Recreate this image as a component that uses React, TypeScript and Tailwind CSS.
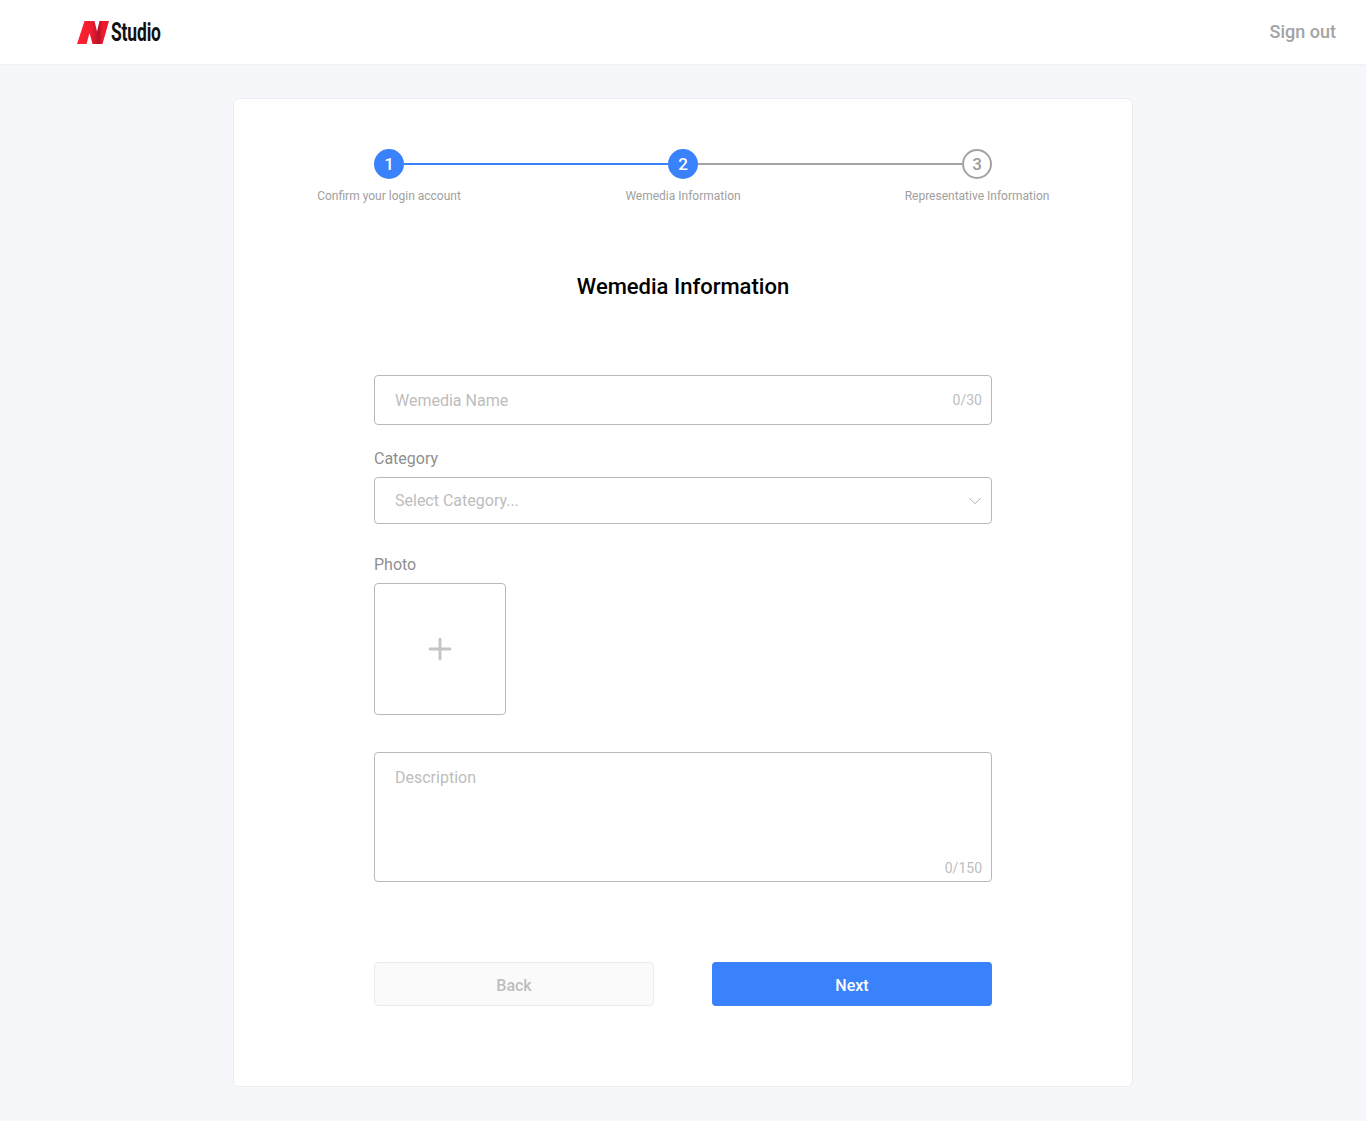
import { ChevronDown, Plus } from "lucide-react";

const steps = [
  { n: 1, label: "Confirm your login account" },
  { n: 2, label: "Wemedia Information" },
  { n: 3, label: "Representative Information" },
];

function StepCircle({ n, active }: { n: number; active: boolean }) {
  return (
    <div
      className={
        active
          ? "flex h-[30px] w-[30px] shrink-0 items-center justify-center rounded-full bg-[#3a81fc] pt-px text-[17px] font-medium text-white"
          : "flex h-[30px] w-[30px] shrink-0 items-center justify-center rounded-full border-2 border-[#a3a3a3] pt-px text-[17px] font-medium text-[#9a9a9a]"
      }
    >
      {n}
    </div>
  );
}

function Logo() {
  return (
    <div className="flex items-center">
      <svg width="32" height="25" viewBox="0 0 32 25">
        <defs>
          <linearGradient id="nred" x1="0" y1="0" x2="1" y2="0">
            <stop offset="0" stopColor="#ff2433" />
            <stop offset="0.45" stopColor="#f01c2c" />
            <stop offset="0.68" stopColor="#b5122a" />
            <stop offset="0.8" stopColor="#ee1a2c" />
            <stop offset="1" stopColor="#f01a2c" />
          </linearGradient>
        </defs>
        <path d="M7.500 1h10l2.500 10.500L22.500 1H32l-6.500 23H15.500l-3-11L9.500 24H0z" fill="url(#nred)" />
      </svg>
      <span className="ml-[2px] origin-left scale-x-[0.67] text-[26px] leading-none font-bold tracking-[-0.2px] text-[#111]">
        Studio
      </span>
    </div>
  );
}

export default function App() {
  return (
    <div className="min-h-[1121px] bg-[#f5f7fa] font-['Roboto',sans-serif]">
      <header className="flex h-16 items-center justify-between bg-white pr-[30px] pl-[77px] shadow-[0_1px_2px_rgba(0,0,0,0.04)]">
        <Logo />
        <button className="text-lg font-medium text-[#a3a3a3]">Sign out</button>
      </header>

      <main className="mx-auto mt-[34px] h-[989px] w-[900px] rounded-md border border-[#ececf0] bg-white pt-[50px]">
        <div className="mx-auto flex w-[618px] items-center">
          <StepCircle n={1} active />
          <div className="h-[2px] flex-1 bg-[#3a81fc]" />
          <StepCircle n={2} active />
          <div className="h-[2px] flex-1 bg-[#a3a3a3]" />
          <StepCircle n={3} active={false} />
        </div>
        <div className="mx-auto mt-[9px] grid w-[882px] grid-cols-3 text-center text-xs leading-4 text-[#a0a0a0]">
          {steps.map((step) => (
            <div key={step.n}>{step.label}</div>
          ))}
        </div>

        <h1 className="mt-[68px] text-center text-[22px] leading-[30px] font-medium text-black">
          Wemedia Information
        </h1>

        <form className="mx-auto mt-[73px] w-[618px]">
          <div className="flex h-[50px] items-center justify-between rounded border border-[#b8b8b8] pr-[9px] pl-5">
            <span className="mt-[2px] text-base text-[#bdbdbd]">Wemedia Name</span>
            <span className="text-sm text-[#bdbdbd]">0/30</span>
          </div>

          <div className="mt-6 text-base leading-5 text-[#8f8f8f]">Category</div>
          <div className="mt-2 flex h-[47px] items-center justify-between rounded border border-[#b8b8b8] pr-[5px] pl-5">
            <span className="text-base text-[#bdbdbd]">Select Category...</span>
            <ChevronDown size={22} strokeWidth={1} className="mt-px text-[#a8a8a8]" />
          </div>

          <div className="mt-[31px] text-base leading-5 text-[#8f8f8f]">Photo</div>
          <div className="mt-2 flex h-[132px] w-[132px] items-center justify-center rounded border border-[#b8b8b8]">
            <Plus size={34} strokeWidth={2} className="-mt-px text-[#c4c4c4]" />
          </div>

          <div className="relative mt-[37px] h-[130px] rounded border border-[#b8b8b8] pt-[13px] pl-5">
            <span className="text-base text-[#bdbdbd]">Description</span>
            <span className="absolute right-[9px] bottom-[3px] text-sm text-[#bdbdbd]">0/150</span>
          </div>

          <div className="mt-20 flex justify-between">
            <button
              type="button"
              className="h-11 w-[280px] rounded border border-[#ececec] bg-[#fafafa] pt-[3px] text-base font-medium text-[#bdbdbd]"
            >
              Back
            </button>
            <button type="button" className="h-11 w-[280px] rounded bg-[#3a81fc] pt-[3px] text-base font-medium text-white">
              Next
            </button>
          </div>
        </form>
      </main>
    </div>
  );
}
